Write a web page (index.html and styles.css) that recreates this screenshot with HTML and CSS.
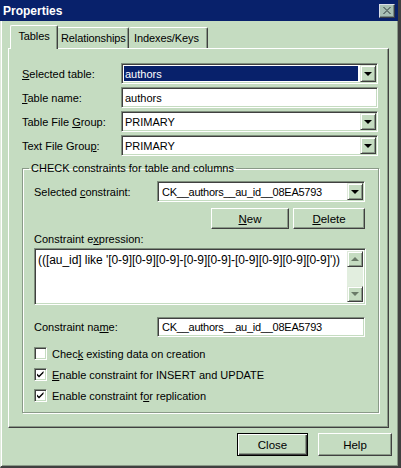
FILE: index.html
```html
<!DOCTYPE html>
<html>
<head>
<meta charset="utf-8">
<link rel="stylesheet" href="styles.css">
</head>
<body>
<div class="window">
  <div class="titlebar">
    <span class="title">Properties</span>
    <span class="xbtn"><svg width="10" height="9" viewBox="0 0 10 9"><path d="M1 1 L8 8 M2 1 L9 8 M8 1 L1 8 M9 1 L2 8" stroke="#000" stroke-width="1" fill="none"/></svg></span>
  </div>
  <div class="tabs">
    <div class="tab active">Tables</div>
    <div class="tab">Relationships</div>
    <div class="tab">Indexes/Keys</div>
  </div>
  <div class="panel">
    <div class="form">
      <div class="row">
        <span class="label"><u>S</u>elected table:</span>
        <div class="field combo">
          <span class="value selected">authors</span>
          <span class="dropbtn"><span class="arrow"></span></span>
        </div>
      </div>
      <div class="row">
        <span class="label"><u>T</u>able name:</span>
        <div class="field"><span class="value">authors</span></div>
      </div>
      <div class="row">
        <span class="label">Table File <u>G</u>roup:</span>
        <div class="field combo">
          <span class="value">PRIMARY</span>
          <span class="dropbtn"><span class="arrow"></span></span>
        </div>
      </div>
      <div class="row">
        <span class="label">Text File Grou<u>p</u>:</span>
        <div class="field combo">
          <span class="value">PRIMARY</span>
          <span class="dropbtn"><span class="arrow"></span></span>
        </div>
      </div>
    </div>
    <fieldset class="group">
      <legend>CHECK constraints for table and columns</legend>
      <div class="grow">
        <span class="glabel">Selected <u>c</u>onstraint:</span>
        <div class="field combo gfield">
          <span class="value ck">CK__authors__au_id__08EA5793</span>
          <span class="dropbtn"><span class="arrow"></span></span>
        </div>
      </div>
      <div class="btnrow">
        <div class="btn new"><u>N</u>ew</div>
        <div class="btn del"><u>D</u>elete</div>
      </div>
      <div class="exlabel">Constraint e<u>x</u>pression:</div>
      <div class="textarea">
        <div class="tvalue">(([au_id] like '[0-9][0-9][0-9]-[0-9][0-9]-[0-9][0-9][0-9][0-9]'))</div>
        <div class="vscroll">
          <span class="sbtn"><span class="arrow up"></span></span>
          <span class="track"></span>
          <span class="sbtn"><span class="arrow"></span></span>
        </div>
      </div>
      <div class="grow namerow">
        <span class="glabel">Constraint na<u>m</u>e:</span>
        <div class="field gfield"><span class="value ck">CK__authors__au_id__08EA5793</span></div>
      </div>
      <div class="checks">
        <div class="check"><span class="box"></span><span>Chec<u>k</u> existing data on creation</span></div>
        <div class="check"><span class="box on"><svg width="9" height="9" viewBox="0 0 9 9"><path d="M1 3.5 L3 5.5 L7.5 1 L7.5 3 L3 7.5 L1 5.5 Z" fill="#000"/></svg></span><span><u>E</u>nable constraint for INSERT and UPDATE</span></div>
        <div class="check"><span class="box on"><svg width="9" height="9" viewBox="0 0 9 9"><path d="M1 3.5 L3 5.5 L7.5 1 L7.5 3 L3 7.5 L1 5.5 Z" fill="#000"/></svg></span><span>Enable constraint f<u>o</u>r replication</span></div>
      </div>
    </fieldset>
  </div>
  <div class="footer">
    <div class="btn default">Close</div>
    <div class="btn">Help</div>
  </div>
</div>
</body>
</html>
```

FILE: styles.css
```css
* { box-sizing: border-box; }
html, body { margin: 0; padding: 0; }
body {
  width: 401px;
  height: 468px;
  overflow: hidden;
  background: #c5dcc1;
  font-family: "Liberation Sans", Arial, sans-serif;
  font-size: 11px;
  color: #000;
}
u { text-decoration: underline; text-underline-offset: 1px; }

.window {
  width: 401px;
  height: 468px;
  background: #c5dcc1;
  border-left: 1px solid #dfeadb;
  border-right: 3px solid #404040;
  border-bottom: 2px solid #404040;
  box-shadow: inset 1px 0 0 #fff, inset -1px -1px 0 #8a9a88;
  display: flex;
  flex-direction: column;
}

.titlebar {
  height: 21px;
  flex: none;
  margin-left: -1px;
  background: #08216b;
  display: flex;
  align-items: center;
  justify-content: space-between;
  padding: 0 3px 0 3px;
}
.title {
  color: #fff;
  font-weight: bold;
  font-size: 12px;
}
.xbtn {
  width: 16px;
  height: 14px;
  background: #c5dcc1;
  border: 1px solid;
  border-color: #fff #404040 #404040 #fff;
  box-shadow: inset -1px -1px 0 #8a9a88;
  display: flex;
  align-items: center;
  justify-content: center;
  opacity: 0.85;
}
.xbtn svg path { stroke: #7a8a78; }

.tabs {
  display: flex;
  align-items: flex-end;
  height: 27px;
  flex: none;
  padding-left: 9px;
  position: relative;
  z-index: 2;
}
.tab {
  height: 21px;
  padding: 0 4px;
  display: flex;
  align-items: center;
  border-top: 1px solid #fff;
  border-left: 1px solid #fff;
  border-right: 1px solid #404040;
  box-shadow: inset -1px 0 0 #8a9a88;
  border-radius: 2px 2px 0 0;
  font-size: 11px;
  letter-spacing: -0.1px;
  white-space: nowrap;
}
.tab.active {
  height: 24px;
  width: 48px;
  justify-content: center;
  padding-bottom: 3px;
  margin-bottom: -1px;
  background: #c5dcc1;
  margin-right: -1px;
  position: relative;
  z-index: 3;
}
.tab:nth-child(2) { width: 72px; padding-left: 4px; border-left: none; }
.tab:nth-child(3) { width: 79px; padding-left: 5px; border-left: none; }

.panel {
  margin-left: 7px;
  width: 381px;
  height: 380px;
  flex: none;
  border: 1px solid;
  border-color: #fff #404040 #404040 #fff;
  box-shadow: inset -1px -1px 0 #8a9a88;
  padding: 14px 10px 0 13px;
}

.form { display: flex; flex-direction: column; gap: 3px; }
.row { display: flex; align-items: center; height: 21px; }
.label { width: 99px; flex: none; }

.field {
  flex: 1;
  height: 21px;
  background: #fff;
  border: 1px solid;
  border-color: #7f8f7d #fff #fff #7f8f7d;
  box-shadow: inset 1px 1px 0 #404040, inset -1px -1px 0 #c5dcc1;
  display: flex;
  align-items: center;
  padding: 2px;
  position: relative;
}
.value {
  flex: 1;
  height: 100%;
  display: flex;
  align-items: center;
  padding-left: 1px;
  white-space: nowrap;
}
.value.ck { letter-spacing: -0.25px; padding-left: 2px; }
.value.selected {
  background: #08216b;
  color: #fff;
  margin-right: 2px;
}
.dropbtn {
  width: 16px;
  height: 17px;
  flex: none;
  background: #c5dcc1;
  border: 1px solid;
  border-color: #dfeadb #404040 #404040 #dfeadb;
  box-shadow: inset 1px 1px 0 #fff, inset -1px -1px 0 #8a9a88;
  display: flex;
  align-items: center;
  justify-content: center;
  margin-right: -1px;
}
.arrow {
  width: 0;
  height: 0;
  border-left: 4px solid transparent;
  border-right: 4px solid transparent;
  border-top: 4px solid #000;
}
.arrow.up {
  border-top: none;
  border-bottom: 4px solid #000;
}

.group {
  margin: 6px 0 0 0;
  width: 357px;
  height: 251px;
  border: 1px solid #8a9a88;
  box-shadow: inset 1px 1px 0 #fff, 1px 1px 0 #fff;
  padding: 6px 12px 0 11px;
  min-width: 0;
}
.group legend {
  padding: 0 2px;
  margin-left: -5px;
  line-height: 13px;
  font-size: 11px;
}
.grow { display: flex; align-items: center; height: 21px; }
.glabel { width: 123px; flex: none; }
.gfield { flex: none; width: 208px; }

.btnrow {
  display: flex;
  justify-content: flex-end;
  gap: 4px;
  margin-top: 6px;
  padding-right: 1px;
}
.btn {
  height: 21px;
  background: #c5dcc1;
  border: 1px solid;
  border-color: #fff #404040 #404040 #fff;
  box-shadow: inset -1px -1px 0 #8a9a88;
  display: flex;
  align-items: center;
  justify-content: center;
  font-size: 11.5px;
}
.btn.new { width: 78px; }
.btn.del { width: 72px; }

.exlabel { margin-top: 2px; height: 16px; line-height: 16px; }

.textarea {
  margin-top: 1px;
  width: 332px;
  height: 57px;
  background: #fff;
  border: 1px solid;
  border-color: #7f8f7d #fff #fff #7f8f7d;
  box-shadow: inset 1px 1px 0 #404040, inset -1px -1px 0 #c5dcc1;
  display: flex;
  padding: 2px;
}
.tvalue {
  flex: 1;
  padding: 2px 0 0 1px;
  white-space: nowrap;
  font-size: 12px;
  letter-spacing: -0.05px;
}
.vscroll {
  width: 16px;
  flex: none;
  display: flex;
  flex-direction: column;
}
.sbtn {
  width: 16px;
  height: 16px;
  background: #c5dcc1;
  border: 1px solid;
  border-color: #dfeadb #404040 #404040 #dfeadb;
  box-shadow: inset 1px 1px 0 #fff, inset -1px -1px 0 #8a9a88;
  display: flex;
  align-items: center;
  justify-content: center;
}
.sbtn .arrow { border-top-color: #6a7a68; }
.sbtn .arrow.up { border-bottom-color: #6a7a68; }
.track {
  flex: 1;
  background: #e2eedf;
}

.namerow { margin-top: 11px; }
.namerow .field { height: 20px; }

.checks {
  margin-top: 10px;
  display: flex;
  flex-direction: column;
  gap: 8px;
}
.check {
  display: flex;
  align-items: center;
  height: 13px;
  gap: 5px;
  font-size: 11px;
}
.box {
  width: 13px;
  height: 13px;
  flex: none;
  background: #fff;
  border: 1px solid;
  border-color: #7f8f7d #fff #fff #7f8f7d;
  box-shadow: inset 1px 1px 0 #404040, inset -1px -1px 0 #c5dcc1;
  display: flex;
  align-items: center;
  justify-content: center;
}

.footer {
  display: flex;
  justify-content: flex-end;
  gap: 10px;
  padding: 5px 6px 0 0;
}
.footer .btn { width: 74px; height: 23px; }
.footer .btn.default {
  width: 71px;
  border: 1px solid #000;
  box-shadow: inset 1px 1px 0 #fff, inset -1px -1px 0 #404040, inset -2px -2px 0 #8a9a88;
}
```
